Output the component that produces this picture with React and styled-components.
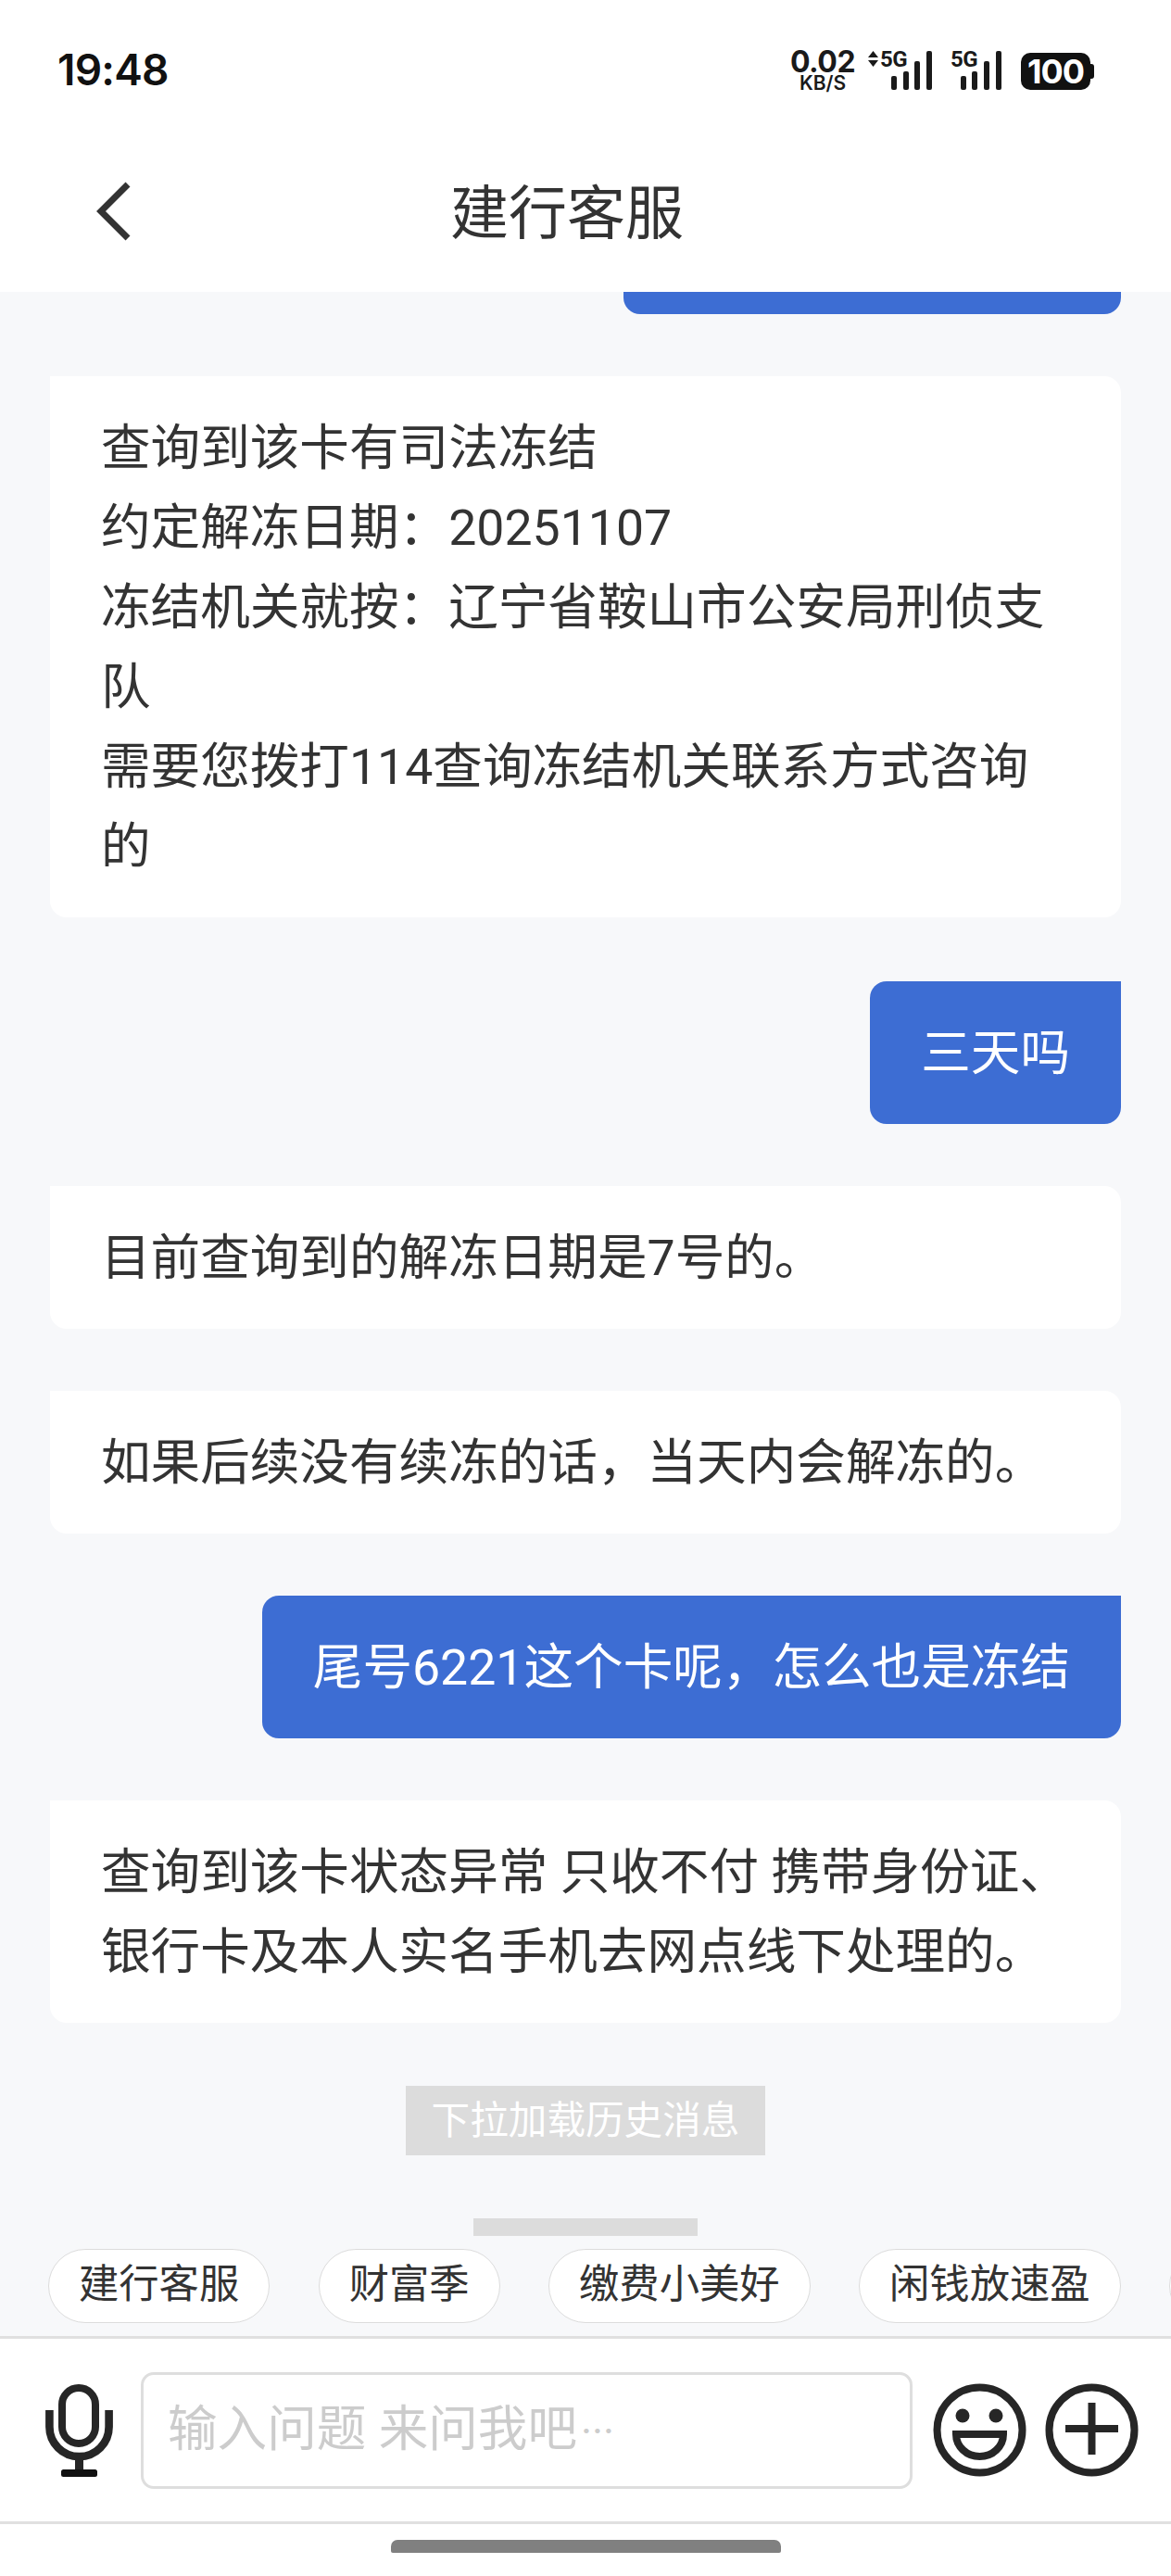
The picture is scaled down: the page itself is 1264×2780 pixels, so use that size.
import React from "react";
import styled, { createGlobalStyle } from "styled-components";

const cjk = `Roboto, "Noto Sans CJK SC", "Noto Sans", sans-serif`;

const Global = createGlobalStyle`
  html, body { margin: 0; padding: 0; background: #fff; }
  * { box-sizing: border-box; }
`;

const Page = styled.div`
  width: 1264px;
  height: 2780px;
  display: flex;
  flex-direction: column;
  overflow: hidden;
  background: #f7f8fa;
  font-family: ${cjk};
`;

const Header = styled.header`
  height: 315px;
  flex: none;
  background: #fff;
  display: flex;
  flex-direction: column;
`;

const StatusBar = styled.div`
  height: 132px;
  padding: 51px 0 0 62px;
  display: flex;
  align-items: flex-start;
  justify-content: space-between;
`;

const Clock = styled.div`
  font: 600 46px/48px Inter, sans-serif;
  color: #111;
  letter-spacing: -0.8px;
`;

const StatusIcons = styled.div`
  display: flex;
  align-items: flex-start;
  padding: 1px 87px 0 0;
`;

const Speed = styled.div`
  width: 72px;
  margin-right: 12px;
  display: flex;
  flex-direction: column;
  align-items: center;
  color: #1a1a1a;
  font-family: Inter, sans-serif;
`;

const SpeedValue = styled.span`
  font-size: 32px;
  line-height: 30px;
  font-weight: 700;
  letter-spacing: -0.5px;
`;

const SpeedUnit = styled.span`
  font-size: 21px;
  line-height: 15px;
  font-weight: 600;
`;

const SignalIcon = styled.svg`
  flex: none;
  display: block;
  overflow: visible;
  margin-right: ${(p) => p.$gap}px;
`;

const SignalLabel = styled.text`
  font: 700 24px Roboto, sans-serif;
  fill: #1a1a1a;
  letter-spacing: -0.5px;
`;

const Battery = styled.div`
  position: relative;
  width: 75px;
  height: 40px;
  margin-top: 5px;
  border-radius: 10px;
  background: #111;
  color: #fff;
  font: 700 36px/40px Inter, sans-serif;
  text-align: center;
  letter-spacing: -1px;
  &::after {
    content: "";
    position: absolute;
    right: -4px;
    top: 12px;
    width: 4px;
    height: 16px;
    border-radius: 0 3px 3px 0;
    background: #111;
  }
`;

const NavBar = styled.div`
  flex: 1;
  display: flex;
  align-items: flex-start;
  padding: 64px 0 0 103px;
`;

const BackIcon = styled.svg`
  flex: none;
  display: block;
`;

const Title = styled.h1`
  margin: 2px 0 0 345px;
  font-size: 63px;
  line-height: 66px;
  font-weight: 400;
  color: #333;
`;

const Chat = styled.main`
  flex: 1;
  min-height: 0;
  padding: 0 54px;
  display: flex;
  flex-direction: column;
  align-items: flex-start;
`;

const ClippedBubble = styled.div`
  align-self: flex-end;
  width: 537px;
  height: 24px;
  margin-bottom: 67px;
  border-radius: 0 0 18px 18px;
  background: #3d6dd3;
`;

const Bubble = styled.div`
  align-self: ${(p) => (p.$mine ? "flex-end" : "stretch")};
  margin-bottom: ${(p) => p.$after ?? 67}px;
  padding: 35px 55px 33px;
  border-radius: ${(p) => (p.$mine ? "18px 0 18px 18px" : "0 18px 18px 18px")};
  background: ${(p) => (p.$mine ? "#3d6dd3" : "#fff")};
  color: ${(p) => (p.$mine ? "#fff" : "#333")};
  font-size: 53.6px;
  line-height: 86px;
  font-weight: 400;
`;

const BubbleLine = styled.div``;

const LoadHint = styled.div`
  align-self: center;
  height: 75px;
  padding: 0 27.5px;
  background: #dcdcdc;
  color: #fff;
  font-size: 41.6px;
  line-height: 75px;
  white-space: nowrap;
`;

const Footer = styled.footer`
  flex: none;
  display: flex;
  flex-direction: column;
  align-items: stretch;
`;

const Notch = styled.div`
  align-self: center;
  width: 242px;
  height: 19px;
  margin-bottom: 14px;
  background: #dcdcdc;
`;

const Chips = styled.div`
  display: flex;
  gap: 52.5px;
  padding: 0 0 14px 52px;
  overflow: hidden;
`;

const Chip = styled.div`
  flex: none;
  height: 80px;
  min-width: 80px;
  padding: 0 32px;
  border: 1px solid #dcdcdc;
  border-radius: 40px;
  background: #fff;
  color: #333;
  font-size: 43.3px;
  line-height: 76px;
  white-space: nowrap;
`;

const InputBar = styled.div`
  height: 203px;
  flex: none;
  padding-left: 49px;
  display: flex;
  align-items: center;
  background: #fff;
  border-top: 3px solid #e0e0e0;
  border-bottom: 3px solid #e0e0e0;
`;

const BarIcon = styled.svg`
  flex: none;
  display: block;
  margin-left: ${(p) => p.$left}px;
`;

const Field = styled.div`
  flex: none;
  width: 833px;
  height: 126px;
  margin-left: 30px;
  padding-left: 26px;
  border: 3px solid #dedede;
  border-radius: 14px;
  background: #fff;
  color: #ccc;
  font-size: 53.6px;
  line-height: 118px;
`;

const FieldDots = styled.span`
  margin-left: 4px;
  font-size: 46px;
  font-family: Roboto, sans-serif;
`;

const HomeArea = styled.div`
  height: 56px;
  flex: none;
  background: #fff;
  display: flex;
  justify-content: center;
  padding-top: 17px;
`;

const HomeBar = styled.div`
  width: 421px;
  height: 14px;
  border-radius: 7px 7px 2px 2px;
  background: #808080;
`;

function Signal({ arrows, gap }) {
  const bars = arrows
    ? [[26, 82], [39, 77], [51, 66], [64, 55]]
    : [[12, 82], [24, 77], [37, 66], [50, 55]];
  return (
    <SignalIcon width={arrows ? 71 : 56} height="46" viewBox={arrows ? "0 52 71 46" : "0 52 56 46"} $gap={gap}>
      {arrows && <path d="M1 62 L6.5 55 L12 62 Z M1 65 L6.5 72 L12 65 Z" fill="#1a1a1a" />}
      <SignalLabel x={arrows ? 14 : 1} y="72">5G</SignalLabel>
      {bars.map(([x, y]) => (
        <rect key={x} x={x} y={y} width="6" height={97 - y} rx="2" fill="#1a1a1a" />
      ))}
    </SignalIcon>
  );
}

export default function App() {
  return (
    <Page>
      <Global />
      <Header>
        <StatusBar>
          <Clock>19:48</Clock>
          <StatusIcons>
            <Speed>
              <SpeedValue>0.02</SpeedValue>
              <SpeedUnit>KB/S</SpeedUnit>
            </Speed>
            <Signal arrows gap={18} />
            <Signal gap={21} />
            <Battery>100</Battery>
          </StatusIcons>
        </StatusBar>
        <NavBar>
          <BackIcon width="38" height="64" viewBox="0 0 38 64">
            <path d="M35 3 L6 32 L35 61" fill="none" stroke="#333" strokeWidth="7" />
          </BackIcon>
          <Title>建行客服</Title>
        </NavBar>
      </Header>
      <Chat>
        <ClippedBubble />
        <Bubble $after={69}>
          <BubbleLine>查询到该卡有司法冻结</BubbleLine>
          <BubbleLine>{"约定解冻日期\uFF1A20251107"}</BubbleLine>
          <BubbleLine>{"冻结机关就按\uFF1A辽宁省鞍山市公安局刑侦支队"}</BubbleLine>
          <BubbleLine>需要您拨打114查询冻结机关联系方式咨询的</BubbleLine>
        </Bubble>
        <Bubble $mine>三天吗</Bubble>
        <Bubble>目前查询到的解冻日期是7号的。</Bubble>
        <Bubble>{"如果后续没有续冻的话\uFF0C当天内会解冻的。"}</Bubble>
        <Bubble $mine>{"尾号6221这个卡呢\uFF0C怎么也是冻结"}</Bubble>
        <Bubble $after={68}>查询到该卡状态异常 只收不付 携带身份证、银行卡及本人实名手机去网点线下处理的。</Bubble>
        <LoadHint>下拉加载历史消息</LoadHint>
      </Chat>
      <Footer>
        <Notch />
        <Chips>
          <Chip>建行客服</Chip>
          <Chip>财富季</Chip>
          <Chip>缴费小美好</Chip>
          <Chip>闲钱放速盈</Chip>
          <Chip aria-hidden="true" />
        </Chips>
        <InputBar>
          <BarIcon width="73" height="100" viewBox="0 0 73 100">
            <rect x="18" y="4" width="36" height="60" rx="18" fill="none" stroke="#262626" strokeWidth="8" />
            <path d="M4.4 28 V46 A32 32 0 0 0 68.6 46 V28" fill="none" stroke="#262626" strokeWidth="8.6" />
            <path d="M36.5 80 V94" stroke="#262626" strokeWidth="9" />
            <rect x="17" y="92" width="39" height="8" rx="2.5" fill="#111" />
          </BarIcon>
          <Field>输入问题 来问我吧<FieldDots>···</FieldDots></Field>
          <BarIcon width="101" height="101" viewBox="0 0 101 101" $left={22}>
            <circle cx="50.5" cy="50.5" r="46" fill="none" stroke="#262626" strokeWidth="8" />
            <circle cx="32" cy="35" r="7.5" fill="#262626" />
            <circle cx="68" cy="35" r="7.5" fill="#262626" />
            <path d="M25 55 H76 A25.5 24 0 0 1 25 55 Z" fill="none" stroke="#262626" strokeWidth="8" />
          </BarIcon>
          <BarIcon width="101" height="101" viewBox="0 0 101 101" $left={20}>
            <circle cx="50.5" cy="50.5" r="46" fill="none" stroke="#262626" strokeWidth="8" />
            <path d="M22 49 H79 M50.5 21 V77" fill="none" stroke="#262626" strokeWidth="8" />
          </BarIcon>
        </InputBar>
        <HomeArea>
          <HomeBar />
        </HomeArea>
      </Footer>
    </Page>
  );
}
